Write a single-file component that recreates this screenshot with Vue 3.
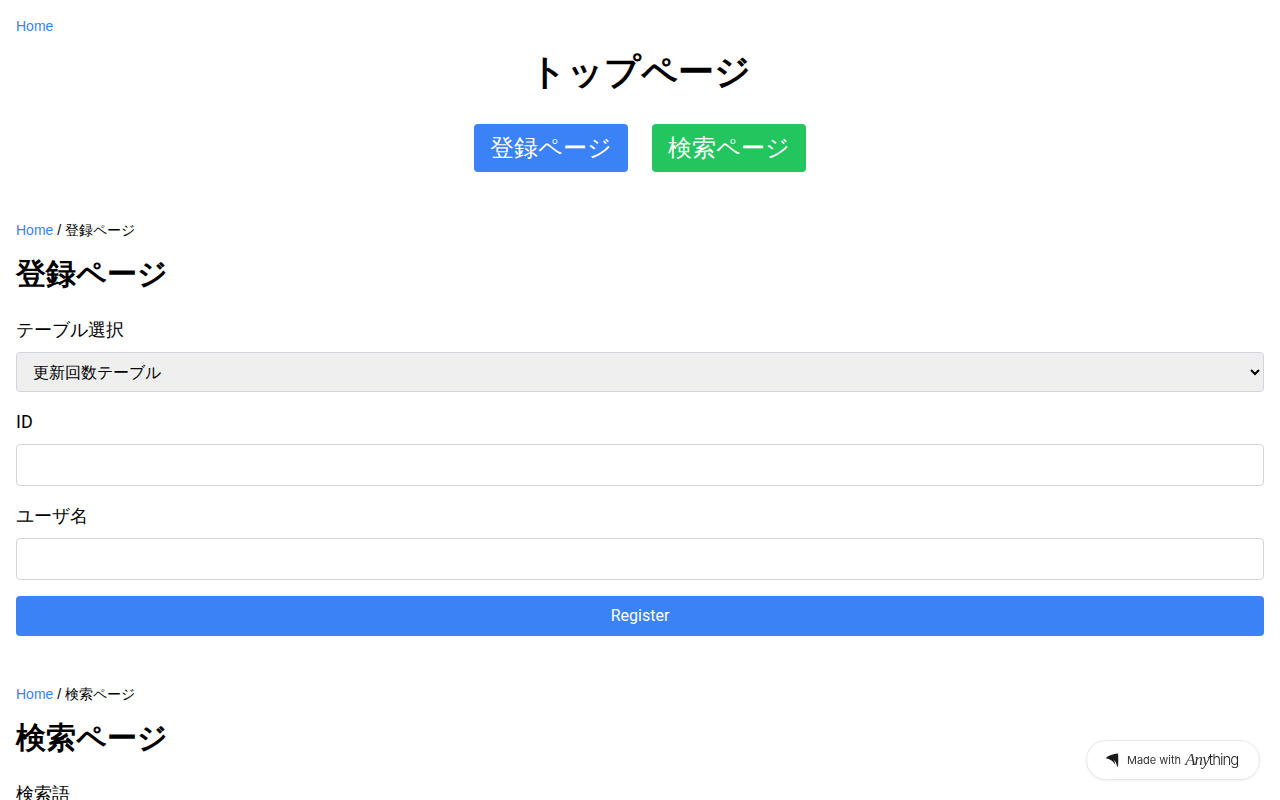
<script setup>
const fieldsId = ['ID', 'ユーザ名']
</script>

<template>
  <div class="page">
    <section class="top">
      <nav class="crumb"><a class="link">Home</a></nav>
      <h1 class="title">トップページ</h1>
      <div class="actions">
        <a class="action blue">登録ページ</a>
        <a class="action green">検索ページ</a>
      </div>
    </section>

    <section class="block">
      <nav class="crumb"><a class="link">Home</a> / 登録ページ</nav>
      <h2 class="heading">登録ページ</h2>
      <div class="field">
        <label class="label">テーブル選択</label>
        <select class="select"><option>更新回数テーブル</option></select>
      </div>
      <div v-for="f in fieldsId" :key="f" class="field">
        <label class="label">{{ f }}</label>
        <input class="input" type="text" />
      </div>
      <button class="submit">Register</button>
    </section>

    <section class="block">
      <nav class="crumb"><a class="link">Home</a> / 検索ページ</nav>
      <h2 class="heading">検索ページ</h2>
      <div class="field">
        <label class="label">検索語</label>
        <input class="input" type="text" />
      </div>
    </section>

    <div class="badge">
      <svg class="mark" width="14" height="14" viewBox="0 0 14 14">
        <path d="M0.5 5.2 C3.5 2.4 8 0.9 13 0.5 C13.4 4.5 13.4 9 13 13.5 L12 13.5 C11.8 10.8 10.6 8.4 8.4 6.6 C9.6 8.4 10.2 10.2 10.3 12 C8.6 8.4 5.2 5.6 0.5 5.2 Z" fill="#1a1a1a" />
      </svg>
      <span class="made">Made with</span>
      <span class="brand"><i class="any">Any</i><span class="thing">thing</span></span>
    </div>
  </div>
</template>

<style>
html, body { margin: 0; background: #fff; }
</style>

<style scoped>
.page {
  box-sizing: border-box;
  height: 800px;
  overflow: hidden;
  padding: 16px;
  font-family: "Liberation Sans", sans-serif;
  color: #000;
}
.crumb { font-size: 14px; line-height: 20px; margin-bottom: 16px; }
.link { color: #3b82f6; }
.title { margin: 0 0 32px; font-size: 36px; line-height: 40px; font-weight: 700; text-align: center; }
.actions { display: flex; justify-content: center; gap: 24px; }
.action { padding: 8px 16px; border-radius: 4px; color: #fff; font-size: 24px; line-height: 32px; }
.blue { background: #3b82f6; }
.green { background: #22c55e; }
.block { margin-top: 48px; }
.heading { margin: 0 0 24px; font-size: 30px; line-height: 36px; font-weight: 700; }
.field { margin-bottom: 16px; }
.label { display: block; margin-bottom: 8px; font-size: 18px; line-height: 28px; font-family: Roboto, "Liberation Sans", sans-serif; }
.select {
  display: block;
  box-sizing: border-box;
  width: 100%;
  height: 40px;
  padding: 0 12px;
  border: 1px solid #d1d5db;
  border-radius: 4px;
  background: #efefef;
  color: #000;
  font-family: inherit;
  font-size: 16px;
}
.input {
  display: block;
  box-sizing: border-box;
  width: 100%;
  height: 42px;
  padding: 8px 12px;
  border: 1px solid #d1d5db;
  border-radius: 4px;
  background: #fff;
  font-family: inherit;
  font-size: 16px;
}
.submit {
  display: block;
  width: 100%;
  height: 40px;
  padding: 0 0 2px;
  border: 0;
  border-radius: 4px;
  background: #3b82f6;
  color: #fff;
  font-family: Roboto, sans-serif;
  font-size: 16px;
}
.badge {
  position: fixed;
  right: 20px;
  bottom: 20px;
  box-sizing: border-box;
  width: 174px;
  height: 40px;
  display: flex;
  align-items: center;
  padding-left: 18px;
  border: 1px solid #e8e8e8;
  border-radius: 20px;
  background: #fff;
  box-shadow: 0 1px 3px rgba(0, 0, 0, 0.06);
  color: #1f1f1f;
}
.mark { margin-right: 8px; }
.made { font-family: Inter, sans-serif; font-size: 11px; margin-right: 4px; color: #333; }
.brand { display: flex; align-items: baseline; }
.any { font-family: "Liberation Serif", serif; font-style: italic; font-size: 17px; font-weight: 400; letter-spacing: -0.9px; color: #333; }
.thing { font-family: Inter, sans-serif; font-size: 15px; letter-spacing: -1.05px; font-weight: 300; }
</style>
